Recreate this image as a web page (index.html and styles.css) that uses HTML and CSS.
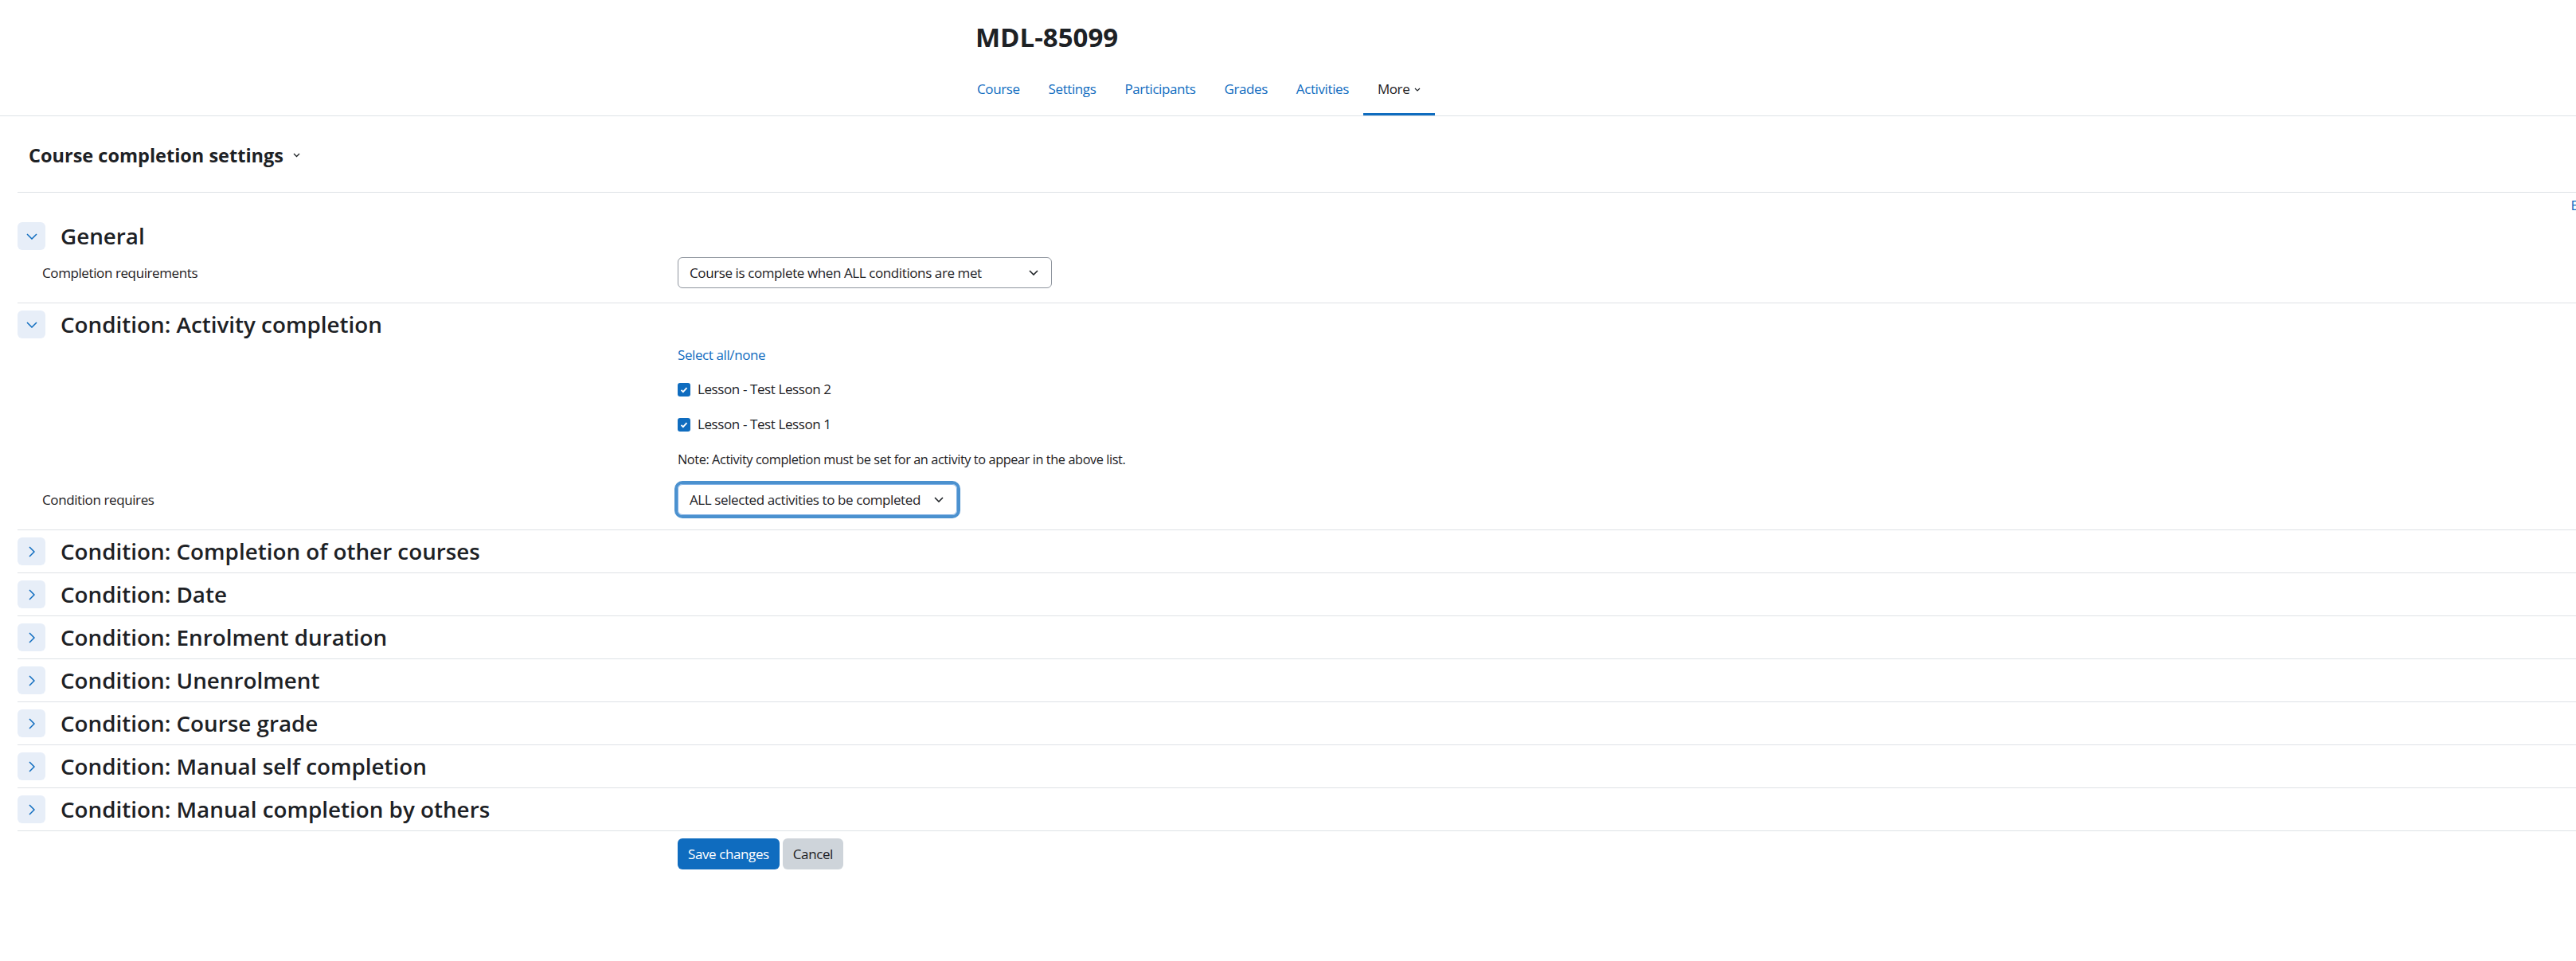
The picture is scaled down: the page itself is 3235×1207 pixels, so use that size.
FILE: index.html
```html
<!DOCTYPE html>
<html lang="en">
<head>
    <meta charset="UTF-8">
    <meta name="viewport" content="width=device-width, initial-scale=1.0">
    <title>MDL-85099: Course completion settings</title>
    <link rel="stylesheet" href="styles.css">
</head>
<body>
    <header class="page-header">
        <div class="header-inner">
            <h1 class="course-title">MDL-85099</h1>
            <nav class="secondary-nav">
                <a href="#" class="nav-link">Course</a>
                <a href="#" class="nav-link">Settings</a>
                <a href="#" class="nav-link">Participants</a>
                <a href="#" class="nav-link">Grades</a>
                <a href="#" class="nav-link">Activities</a>
                <a href="#" class="nav-link active">More
                    <svg class="caret" width="8" height="5" viewBox="0 0 8 5"><path d="M1 1l3 3 3-3" fill="none" stroke="#1d2125" stroke-width="1.2"/></svg>
                </a>
            </nav>
        </div>
    </header>

    <div class="tertiary">
        <h2 class="tertiary-title">Course completion settings
            <svg width="9" height="6" viewBox="0 0 9 6"><path d="M1 1l3.5 3.5 3.5-3.5" fill="none" stroke="#1d2125" stroke-width="1.3"/></svg>
        </h2>
    </div>

    <form class="course-form">
        <div class="expand-row"><a href="#">Expand all</a></div>

        <!-- General -->
        <div class="section">
            <div class="legend">
                <span class="toggle">
                    <svg width="14" height="8" viewBox="0 0 14 8"><path d="M1 1l6 6 6-6" fill="none" stroke="#0f6cbf" stroke-width="1.5"/></svg>
                </span>
                <h3>General</h3>
            </div>
            <div class="section-body">
                <div class="form-row">
                    <label>Completion requirements</label>
                    <div class="field">
                        <div class="select select-method">
                            <span>Course is complete when ALL conditions are met</span>
                            <svg width="12" height="7" viewBox="0 0 12 7"><path d="M1 1l5 5 5-5" fill="none" stroke="#1d2125" stroke-width="1.6"/></svg>
                        </div>
                    </div>
                </div>
            </div>
        </div>

        <!-- Activity completion -->
        <div class="section">
            <div class="legend">
                <span class="toggle">
                    <svg width="14" height="8" viewBox="0 0 14 8"><path d="M1 1l6 6 6-6" fill="none" stroke="#0f6cbf" stroke-width="1.5"/></svg>
                </span>
                <h3>Condition: Activity completion</h3>
            </div>
            <div class="section-body">
                <div class="form-row">
                    <label></label>
                    <div class="field">
                        <div class="select-all"><a href="#">Select all/none</a></div>
                        <div class="check-row">
                            <svg class="checkbox" width="16" height="17" viewBox="0 0 16 17"><rect x="0" y="0" width="16" height="17" rx="3" fill="#0f6cbf"/><path d="M4.5 8.8l2.4 2.4 4.6-5" fill="none" stroke="#fff" stroke-width="1.8"/></svg>
                            <span>Lesson - Test Lesson 2</span>
                        </div>
                        <div class="check-row">
                            <svg class="checkbox" width="16" height="17" viewBox="0 0 16 17"><rect x="0" y="0" width="16" height="17" rx="3" fill="#0f6cbf"/><path d="M4.5 8.8l2.4 2.4 4.6-5" fill="none" stroke="#fff" stroke-width="1.8"/></svg>
                            <span>Lesson - Test Lesson 1</span>
                        </div>
                        <div class="note">Note: Activity completion must be set for an activity to appear in the above list.</div>
                    </div>
                </div>
                <div class="form-row">
                    <label>Condition requires</label>
                    <div class="field">
                        <div class="select select-focus">
                            <span>ALL selected activities to be completed</span>
                            <svg width="12" height="7" viewBox="0 0 12 7"><path d="M1 1l5 5 5-5" fill="none" stroke="#1d2125" stroke-width="1.6"/></svg>
                        </div>
                    </div>
                </div>
            </div>
        </div>

        <div class="section collapsed">
            <div class="legend">
                <span class="toggle"><svg width="8" height="14" viewBox="0 0 8 14"><path d="M1 1l6 6-6 6" fill="none" stroke="#0f6cbf" stroke-width="1.5"/></svg></span>
                <h3>Condition: Completion of other courses</h3>
            </div>
        </div>
        <div class="section collapsed">
            <div class="legend">
                <span class="toggle"><svg width="8" height="14" viewBox="0 0 8 14"><path d="M1 1l6 6-6 6" fill="none" stroke="#0f6cbf" stroke-width="1.5"/></svg></span>
                <h3>Condition: Date</h3>
            </div>
        </div>
        <div class="section collapsed">
            <div class="legend">
                <span class="toggle"><svg width="8" height="14" viewBox="0 0 8 14"><path d="M1 1l6 6-6 6" fill="none" stroke="#0f6cbf" stroke-width="1.5"/></svg></span>
                <h3>Condition: Enrolment duration</h3>
            </div>
        </div>
        <div class="section collapsed">
            <div class="legend">
                <span class="toggle"><svg width="8" height="14" viewBox="0 0 8 14"><path d="M1 1l6 6-6 6" fill="none" stroke="#0f6cbf" stroke-width="1.5"/></svg></span>
                <h3>Condition: Unenrolment</h3>
            </div>
        </div>
        <div class="section collapsed">
            <div class="legend">
                <span class="toggle"><svg width="8" height="14" viewBox="0 0 8 14"><path d="M1 1l6 6-6 6" fill="none" stroke="#0f6cbf" stroke-width="1.5"/></svg></span>
                <h3>Condition: Course grade</h3>
            </div>
        </div>
        <div class="section collapsed">
            <div class="legend">
                <span class="toggle"><svg width="8" height="14" viewBox="0 0 8 14"><path d="M1 1l6 6-6 6" fill="none" stroke="#0f6cbf" stroke-width="1.5"/></svg></span>
                <h3>Condition: Manual self completion</h3>
            </div>
        </div>
        <div class="section collapsed">
            <div class="legend">
                <span class="toggle"><svg width="8" height="14" viewBox="0 0 8 14"><path d="M1 1l6 6-6 6" fill="none" stroke="#0f6cbf" stroke-width="1.5"/></svg></span>
                <h3>Condition: Manual completion by others</h3>
            </div>
        </div>

        <div class="form-row buttons">
            <label></label>
            <div class="field">
                <button type="button" class="btn btn-primary">Save changes</button>
                <button type="button" class="btn btn-secondary">Cancel</button>
            </div>
        </div>
    </form>
</body>
</html>
```

FILE: styles.css
```css
html,
body {
    margin: 0;
    overflow: hidden;
}

body {
    font-family: "Open Sans", "Noto Sans", sans-serif;
    font-size: 17px;
    letter-spacing: -0.4px;
    line-height: 24px;
    color: #1d2125;
    background-color: #fff;
}

a {
    color: #0f6cbf;
    text-decoration: none;
}

/* header */
.page-header {
    border-bottom: 1px solid #dee2e6;
}

.header-inner {
    width: 785px;
    margin: 0 auto;
}

.course-title {
    margin: 0;
    padding-top: 27px;
    font-size: 33px;
    line-height: 40px;
    font-weight: 700;
    letter-spacing: 0;
}

.secondary-nav {
    display: flex;
    margin: 21px 0 0 -16px;
}

.nav-link {
    display: flex;
    align-items: center;
    gap: 6px;
    padding: 12px 18px 18px;
    border-bottom: 3px solid transparent;
}

.nav-link.active {
    color: #1d2125;
    border-bottom-color: #0f6cbf;
}

/* page heading */
.tertiary {
    margin-left: 22px;
    padding: 34px 0 31px 14px;
    border-bottom: 1px solid #dee2e6;
}

.tertiary-title {
    display: flex;
    align-items: center;
    gap: 12px;
    margin: 0;
    font-size: 23.5px;
    line-height: 30px;
    font-weight: 700;
    letter-spacing: 0;
}

/* form */
.course-form {
    margin-left: 22px;
    width: 3284px;
}

.expand-row {
    margin-top: 4px;
    text-align: right;
}

.section {
    padding: 9px 0 18px;
    border-bottom: 1px solid #dee2e6;
}

.section.collapsed {
    padding-bottom: 9px;
}

.legend {
    display: flex;
    align-items: center;
    gap: 19px;
}

.toggle {
    display: flex;
    align-items: center;
    justify-content: center;
    width: 35px;
    height: 35px;
    border-radius: 6px;
    background-color: #e7eef8;
}

.legend h3 {
    margin: 0;
    font-size: 27.8px;
    line-height: 35px;
    font-weight: 600;
    letter-spacing: 0;
}

.section-body {
    margin-top: 9px;
}

.form-row {
    display: grid;
    grid-template-columns: 829px auto;
    align-items: center;
}

.form-row label {
    padding-left: 31px;
}

.select {
    display: flex;
    align-items: center;
    justify-content: space-between;
    box-sizing: border-box;
    height: 39px;
    padding: 0 16px 0 14px;
    border: 1px solid #8f959e;
    border-radius: 6px;
}

.select-method {
    width: 470px;
}

.select-focus {
    width: 351px;
    border-color: #7fb0e4;
    box-shadow: 0 0 0 4px #4b91cf;
}

.select-all {
    margin-bottom: 19px;
}

.check-row {
    display: flex;
    align-items: center;
    gap: 9px;
    margin-bottom: 20px;
}

.note {
    margin-bottom: 19px;
    font-size: 16.3px;
}

.buttons {
    margin-top: 9px;
}

.btn {
    height: 39px;
    padding: 0 13px;
    border: 0;
    border-radius: 6px;
    font: inherit;
    letter-spacing: inherit;
    cursor: pointer;
}

.btn-primary {
    background-color: #0f6cbf;
    color: #fff;
}

.btn-secondary {
    background-color: #ced4da;
    color: #1d2125;
}
```
